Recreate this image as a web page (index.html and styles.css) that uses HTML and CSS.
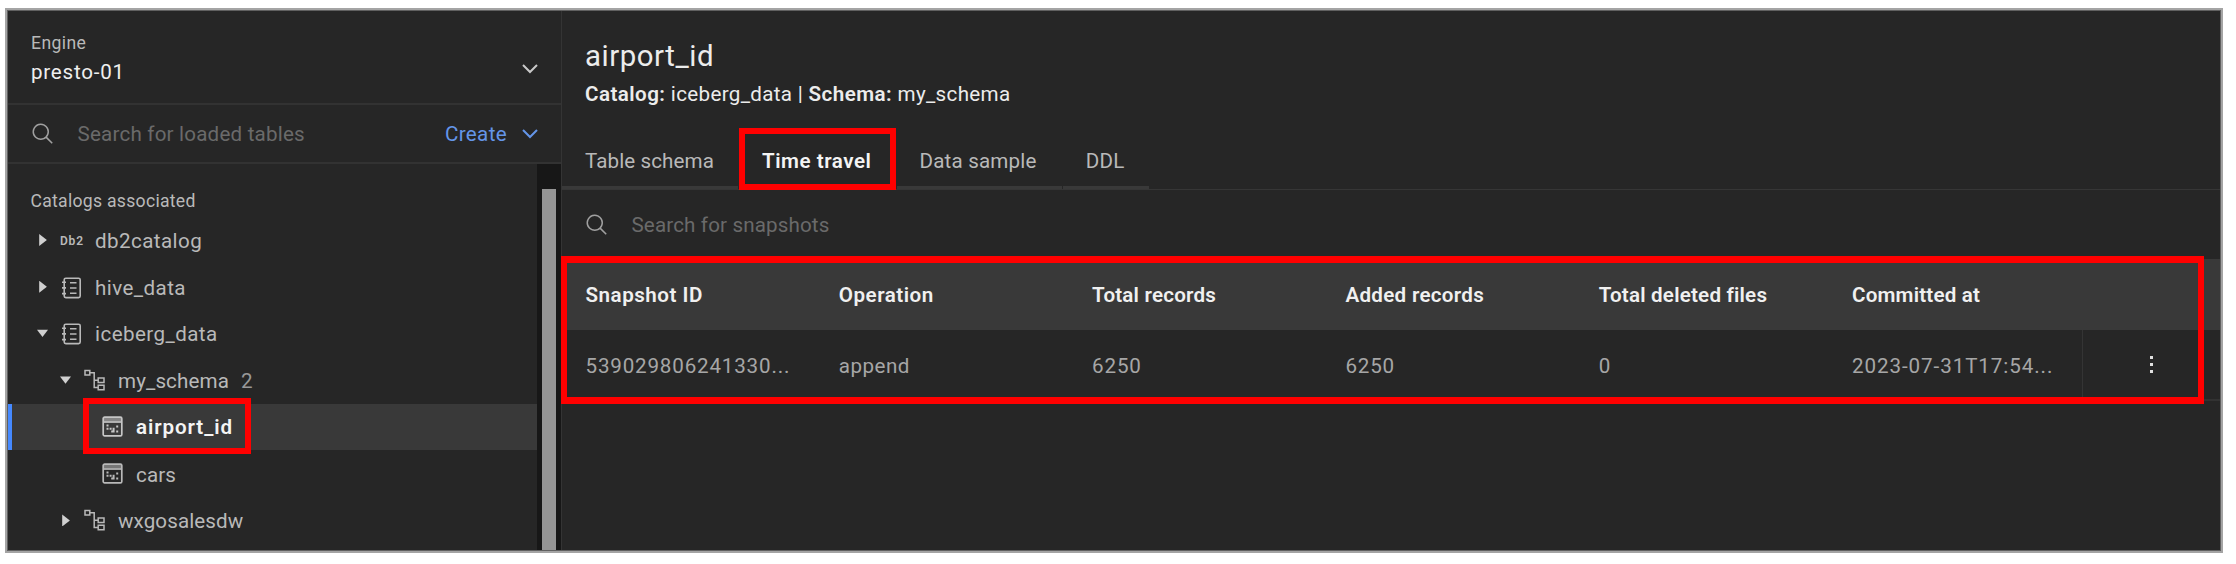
FILE: index.html
```html
<!DOCTYPE html>
<html lang="en">
<head>
<meta charset="utf-8">
<title>Data manager</title>
<link rel="stylesheet" href="styles.css">
</head>
<body>
<svg class="defs" width="0" height="0">
  <symbol id="search" viewBox="0 0 32 32"><path fill="currentColor" d="M29 27.6l-7.5-7.6A11 11 0 1 0 20 21.5l7.6 7.5zM4 13a9 9 0 1 1 9 9 9 9 0 0 1-9-9z"/></symbol>
  <symbol id="chevron" viewBox="0 0 16 10"><path fill="none" stroke="currentColor" stroke-width="2" d="M1 1l7 7 7-7"/></symbol>
  <symbol id="catalog" viewBox="0 0 20 22"><g fill="none" stroke="currentColor" stroke-width="1.6"><rect x="2.2" y="1.2" width="16" height="19.4" rx="1.6"/><path d="M0 5.2h4M0 10.9h4M0 16.6h4M8 5.8h6.5M8 11h6.5M8 16.2h6.5"/></g></symbol>
  <symbol id="schema" viewBox="0 0 22 22"><g fill="none" stroke="currentColor" stroke-width="1.5"><path d="M1 1.5h4.8v4.6H1zM5.8 3.8h4.4v14.7h4M10.2 11.3h4M14.2 9h5.8v4.6h-5.8zM14.2 16.2h5.8v4.6h-5.8z"/></g></symbol>
  <symbol id="table" viewBox="0 0 21 21"><g fill="none" stroke="currentColor" stroke-width="1.7"><rect x="1.2" y="1.2" width="18.6" height="18.6" rx="1.4"/><path d="M1 6h19"/></g><path fill="currentColor" opacity=".55" d="M2 2h17v3.4H2z"/><path fill="currentColor" d="M4.5 8.6h2v2h-2zM4.5 11.8h2v2h-2zM7.6 11.8h2v2h-2zM9.2 14.4h2v2h-2zM10.6 11.8h2v4.6h-2zM14.2 9.6h2v2h-2zM14.2 14.4h2v2h-2z"/></symbol>
</svg>
<div class="frame">
  <aside class="side">
    <div class="engine">
      <div><div class="engine-label">Engine</div><div class="engine-name">presto-01</div></div>
      <svg class="chev"><use href="#chevron"/></svg>
    </div>
    <div class="finder">
      <svg class="search"><use href="#search"/></svg>
      <span class="hint">Search for loaded tables</span>
      <span class="create">Create <svg class="chev"><use href="#chevron"/></svg></span>
    </div>
    <div class="browser">
      <div class="tree">
        <div class="tree-title">Catalogs associated</div>
        <div class="row"><i class="closed"></i><span class="db2">Db2</span><span class="name">db2catalog</span></div>
        <div class="row"><i class="closed"></i><svg class="ic-cat"><use href="#catalog"/></svg><span class="name">hive_data</span></div>
        <div class="row"><i class="open"></i><svg class="ic-cat"><use href="#catalog"/></svg><span class="name">iceberg_data</span></div>
        <div class="row child"><i class="open"></i><svg class="ic-schema"><use href="#schema"/></svg><span class="name tight">my_schema</span><span class="count">2</span></div>
        <div class="row leaf selected"><svg class="ic-table"><use href="#table"/></svg><span class="name">airport_id</span></div>
        <div class="row leaf"><svg class="ic-table"><use href="#table"/></svg><span class="name tight">cars</span></div>
        <div class="row child"><i class="closed"></i><svg class="ic-schema"><use href="#schema"/></svg><span class="name tight">wxgosalesdw</span></div>
      </div>
      <div class="track"><div class="thumb"></div></div>
    </div>
  </aside>
  <main class="main">
    <header class="head">
      <h1 class="title">airport_id</h1>
      <div class="path"><b class="key">Catalog:</b> iceberg_data | <b class="key">Schema:</b> my_schema</div>
    </header>
    <nav class="tabs">
      <span class="tab">Table schema</span><span class="tab active">Time travel</span><span class="tab sample">Data sample</span><span class="tab last">DDL</span>
    </nav>
    <div class="filter"><svg class="search"><use href="#search"/></svg><span class="hint">Search for snapshots</span></div>
    <div class="grid thead">
      <span class="th wide">Snapshot ID</span><span class="th wide">Operation</span><span class="th">Total records</span><span class="th added">Added records</span><span class="th">Total deleted files</span><span class="th">Committed at</span><span></span>
    </div>
    <div class="grid tbody">
      <span class="td">539029806241330...</span><span class="td word">append</span><span class="td">6250</span><span class="td">6250</span><span class="td">0</span><span class="td date">2023-07-31T17:54...</span><span class="menu"><i></i><i></i><i></i></span>
    </div>
  </main>
</div>
<div class="mark mark-tab"></div>
<div class="mark mark-table"></div>
<div class="mark mark-node"></div>
</body>
</html>
```
FILE: styles.css
```css
* { box-sizing: border-box; }
body {
  margin: 0;
  padding: 8px 0 0 5px;
  height: 564px;
  overflow: hidden;
  background: #fff;
  color: #b9b9b9;
  font: 20.6px/30px Roboto, "Liberation Sans", sans-serif;
  white-space: nowrap;
}
.defs { position: absolute; }
.frame {
  width: 2218px;
  height: 545px;
  display: flex;
  background: #262626;
  border: 2px solid #a4a4a4;
  box-shadow: inset 0 0 0 1px #606060;
  padding: 1px;
  overflow: hidden;
}

/* sidebar */
.side {
  width: 554px;
  flex: none;
  display: flex;
  flex-direction: column;
  border-right: 1px solid #343434;
}
.engine {
  height: 94px;
  flex: none;
  display: flex;
  justify-content: space-between;
  padding: 20px 23px 0 23px;
  border-bottom: 2px solid #323232;
}
.engine-label { font-size: 17.6px; line-height: 24px; letter-spacing: .4px; }
.engine-name { margin-top: 2px; letter-spacing: .76px; color: #efefef; }
.chev { width: 16px; height: 10px; }
.engine .chev { margin-top: 33px; color: #c9c9c9; }
.finder {
  height: 59px;
  flex: none;
  display: flex;
  align-items: center;
  padding: 0 23px 0 23px;
  border-bottom: 2px solid #323232;
}
.search { width: 24px; height: 24px; flex: none; color: #a0a0a0; }
.hint { color: #6a6a6a; letter-spacing: .2px; }
.finder .hint { margin-left: 22.5px; padding-top: 1px; }
.create { margin-left: auto; padding-top: 1px; color: #6495e8; letter-spacing: .34px; display: flex; gap: 15px; align-items: center; }
.browser { flex: 1; display: flex; min-height: 0; }
.tree { flex: 1; padding-top: 25px; overflow: hidden; }
.tree-title { margin-bottom: 3.5px; padding-left: 22.5px; font-size: 17.6px; line-height: 24px; letter-spacing: .28px; }
.row { height: 46.75px; display: flex; align-items: center; padding-left: 29px; }
.child { padding-left: 52px; }
.leaf { padding-left: 94px; }
.name, .count { padding-top: 2px; }
.name { letter-spacing: .42px; }
.tight { letter-spacing: .1px; }
.selected { background: #393939; box-shadow: inset 4px 0 #4589ff; color: #f4f4f4; }
.selected .name { padding-top: 1px; font-weight: 600; letter-spacing: .9px; }
.selected .ic-table { color: #c6c6c6; }
.closed, .open { width: 11px; height: 12px; flex: none; background: #d0d0d0; }
.closed { clip-path: polygon(20% 0, 90% 50%, 20% 100%); }
.open { clip-path: polygon(0 20%, 100% 20%, 50% 80%); }
.db2 { width: 35px; margin-left: 12px; padding-top: 3px; font-size: 12px; font-weight: 600; letter-spacing: .8px; }
.ic-cat { width: 20px; height: 22px; margin: 2px 13px 0 14px; }
.ic-schema { width: 22px; height: 22px; margin: 0 12px 0 13px; }
.ic-table { width: 21px; height: 21px; margin-right: 13px; }
.count { margin-left: 12px; color: #989898; }
.track { width: 24px; flex: none; padding: 25px 5px 0; background: #171717; }
.thumb { height: 100%; background: #959595; }

/* main panel */
.main { flex: 1; min-width: 0; }
.head { height: 120px; padding: 27px 23px 0; color: #ececec; }
.title { margin: 0; font-size: 29.4px; line-height: 36px; font-weight: 400; letter-spacing: .54px; }
.path { margin-top: 6px; line-height: 28px; letter-spacing: .32px; }
.key { font-weight: 600; letter-spacing: .45px; }
.tabs { height: 59px; display: flex; gap: 1px; border-bottom: 1px solid #363636; }
.tab { height: 58px; padding: 15px 24px 0 23px; border-bottom: 3px solid #393939; letter-spacing: .09px; }
.active { font-weight: 600; letter-spacing: .54px; color: #f4f4f4; }
.sample { letter-spacing: .18px; padding-right: 25px; }
.last { letter-spacing: .29px; }
.filter { height: 69px; display: flex; align-items: center; padding-left: 23px; }
.filter .hint { margin-left: 22.5px; letter-spacing: .14px; }
.grid { display: grid; grid-template-columns: repeat(6, 253.3px) 1fr; align-items: center; }
.thead { height: 71px; background: #393939; color: #f0f0f0; }
.tbody { height: 71px; border-bottom: 2px solid #323232; color: #a6a6a6; }
.th, .td { padding-left: 23.5px; }
.th { font-weight: 600; letter-spacing: .2px; }
.wide { letter-spacing: .5px; }
.added { letter-spacing: .3px; }
.td { letter-spacing: .82px; padding-top: 2px; }
.word { letter-spacing: .46px; }
.date { letter-spacing: .92px; }
.menu {
  height: 100%;
  display: flex;
  flex-direction: column;
  justify-content: center;
  align-items: center;
  gap: 4px;
  padding-left: 1px;
  border-left: 1px solid #343434;
}
.menu i { width: 3px; height: 3px; background: #e0e0e0; }

/* callout outlines over the panel */
.mark { position: absolute; border: 6px solid #f00; }
.mark-tab { left: 739px; top: 128px; width: 157px; height: 62px; }
.mark-table { left: 561px; top: 256px; width: 1643px; height: 148px; border-width: 7px 6px; }
.mark-node { left: 83px; top: 398px; width: 168px; height: 56px; }
```
